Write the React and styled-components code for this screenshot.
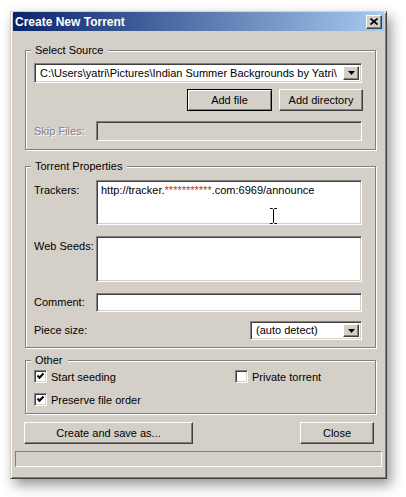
import React from 'react';
import styled, { createGlobalStyle, css } from 'styled-components';

const GlobalStyle = createGlobalStyle`
  html, body { margin: 0; padding: 0; background: #fff; }
  body {
    font-family: "Liberation Sans", Arial, sans-serif;
    font-size: 11px;
    color: #000;
  }
`;

const sunken = css`
  box-sizing: border-box;
  border: 1px solid;
  border-color: #808080 #fff #fff #808080;
  box-shadow: inset 1px 1px #404040, inset -1px -1px #d4d0c8;
`;

const raised = css`
  box-sizing: border-box;
  background: #d4d0c8;
  border: 1px solid;
  border-color: #fff #404040 #404040 #fff;
  box-shadow: inset -1px -1px #808080;
`;

const Page = styled.div`
  width: 406px;
  height: 497px;
  box-sizing: border-box;
  padding: 11px 0 0 10px;
`;

const Window = styled.div`
  width: 377px;
  box-sizing: border-box;
  background: #d4d0c8;
  border: 1px solid;
  border-color: #d4d0c8 #404040 #404040 #d4d0c8;
  box-shadow: inset 1px 1px #fff, inset -1px -1px #808080, 4px 6px 12px rgba(0, 0, 0, 0.42);
  padding: 0 2px 2px 2px;
`;

const TitleBar = styled.div`
  height: 19px;
  display: flex;
  align-items: center;
  justify-content: space-between;
  padding: 0 2px 0 2px;
  background: linear-gradient(to right, #0a246a, #a6caf0);
  color: #fff;
  font-weight: bold;
  font-size: 12px;
`;

const CloseBox = styled.div`
  ${raised};
  width: 16px;
  height: 14px;
  display: flex;
  align-items: center;
  justify-content: center;
`;

const Content = styled.div`
  padding-bottom: 9px;
`;

const Group = styled.div`
  margin: ${(p) => p.$top}px 8px 0 12px;
  border: 1px solid #808080;
  box-shadow: inset 1px 1px #fff, 1px 1px #fff;
  padding: 0 13px ${(p) => p.$bottom}px 8px;
`;

const Legend = styled.div`
  width: fit-content;
  margin: -7px 0 0 -3px;
  padding: 0 5px 0 4px;
  line-height: 13px;
  background: #d4d0c8;
`;

const Combo = styled.div`
  ${sunken};
  background: #fff;
  height: ${(p) => p.$h || 20}px;
  margin-top: ${(p) => p.$top || 0}px;
  padding: 2px;
  display: flex;
  align-items: center;
  ${(p) =>
    p.$w &&
    css`
      width: ${p.$w}px;
      justify-self: end;
    `}
`;

const ComboText = styled.div`
  flex: 1;
  min-width: 0;
  padding-left: 3px;
  white-space: nowrap;
  overflow: hidden;
  line-height: 13px;
`;

const ArrowBtn = styled.div`
  ${raised};
  flex: none;
  width: 16px;
  height: 100%;
  display: flex;
  align-items: center;
  justify-content: center;
`;

const ButtonRow = styled.div`
  display: flex;
  justify-content: ${(p) => p.$justify || 'flex-end'};
  gap: 7px;
  margin: ${(p) => p.$margin};
`;

const Button = styled.div`
  ${raised};
  width: ${(p) => p.$w}px;
  height: 22px;
  display: flex;
  align-items: center;
  justify-content: center;
  ${(p) =>
    p.$default &&
    css`
      border-color: #000;
      box-shadow: inset 1px 1px #fff, inset -1px -1px #808080;
    `}
`;

const FieldRow = styled.div`
  display: grid;
  grid-template-columns: 62px 1fr;
  align-items: ${(p) => (p.$top ? 'start' : 'center')};
  margin-top: ${(p) => p.$mt}px;
`;

const Label = styled.div`
  line-height: 13px;
  padding-top: ${(p) => (p.$top ? 4 : 0)}px;
  ${(p) =>
    p.$disabled &&
    css`
      color: #808080;
      text-shadow: 1px 1px #fff;
    `}
`;

const TextBox = styled.div`
  ${sunken};
  position: relative;
  height: ${(p) => p.$h}px;
  background: ${(p) => (p.$disabled ? '#d4d0c8' : '#fff')};
  padding: 3px 4px;
  line-height: 13px;
  white-space: nowrap;
`;

const Masked = styled.span`
  color: #b23a17;
`;

const Cursor = styled.svg`
  position: absolute;
  left: 172px;
  top: 26px;
`;

const CheckGrid = styled.div`
  display: grid;
  grid-template-columns: 201px 1fr;
  row-gap: 10px;
  margin-top: 3px;
`;

const CheckItem = styled.div`
  display: flex;
  align-items: center;
  gap: 4px;
  height: 13px;
`;

const CheckBox = styled.div`
  ${sunken};
  width: 13px;
  height: 13px;
  background: #fff;
  display: flex;
  align-items: center;
  justify-content: center;
`;

const StatusBar = styled.div`
  margin: 7px 2px 0 2px;
  height: 16px;
  box-sizing: border-box;
  border: 1px solid;
  border-color: #808080 #fff #fff #808080;
`;

const DownArrow = () => (
  <svg width="7" height="4" viewBox="0 0 7 4">
    <polygon points="0,0 7,0 3.5,4" fill="#000" />
  </svg>
);

const Check = ({ on, label }) => (
  <CheckItem>
    <CheckBox>
      {on && (
        <svg width="9" height="9" viewBox="0 0 9 9">
          <path d="M1.5 3.5l2 2.2 4-4.2" stroke="#000" strokeWidth="2" fill="none" />
        </svg>
      )}
    </CheckBox>
    <span>{label}</span>
  </CheckItem>
);

export default function App() {
  return (
    <Page>
      <GlobalStyle />
      <Window>
        <TitleBar>
          <span>Create New Torrent</span>
          <CloseBox>
            <svg width="8" height="7" viewBox="0 0 8 7">
              <path d="M0.5 0.5l7 6M7.5 0.5l-7 6" stroke="#000" strokeWidth="1.7" />
            </svg>
          </CloseBox>
        </TitleBar>
        <Content>
          <Group $top={19} $bottom={8}>
            <Legend>Select Source</Legend>
            <Combo $top={6}>
              <ComboText>C:\Users\yatri\Pictures\Indian Summer Backgrounds by Yatri\</ComboText>
              <ArrowBtn>
                <DownArrow />
              </ArrowBtn>
            </Combo>
            <ButtonRow $margin="6px -1px 0 0">
              <Button $w={85} $default>Add file</Button>
              <Button $w={84}>Add directory</Button>
            </ButtonRow>
            <FieldRow $mt={10}>
              <Label $disabled>Skip Files:</Label>
              <TextBox $h={20} $disabled />
            </FieldRow>
          </Group>

          <Group $top={16} $bottom={7}>
            <Legend>Torrent Properties</Legend>
            <FieldRow $mt={7} $top>
              <Label $top>Trackers:</Label>
              <TextBox $h={45}>
                http://tracker.<Masked>***********</Masked>.com:6969/announce
                <Cursor width="9" height="18" viewBox="0 0 9 18">
                  <path d="M1 1.5h2.5l1 1 1-1H8M4.5 2.5v13M1 16.5h2.5l1-1 1 1H8" stroke="#fff" strokeWidth="3" fill="none" />
                  <path d="M1 1.5h2.5l1 1 1-1H8M4.5 2.5v13M1 16.5h2.5l1-1 1 1H8" stroke="#000" strokeWidth="1" fill="none" />
                </Cursor>
              </TextBox>
            </FieldRow>
            <FieldRow $mt={11} $top>
              <Label $top>Web Seeds:</Label>
              <TextBox $h={46} />
            </FieldRow>
            <FieldRow $mt={11}>
              <Label>Comment:</Label>
              <TextBox $h={19} />
            </FieldRow>
            <FieldRow $mt={9}>
              <Label>Piece size:</Label>
              <Combo $w={112} $h={19}>
                <ComboText>(auto detect)</ComboText>
                <ArrowBtn>
                  <DownArrow />
                </ArrowBtn>
              </Combo>
            </FieldRow>
          </Group>

          <Group $top={12} $bottom={7}>
            <Legend>Other</Legend>
            <CheckGrid>
              <Check on label="Start seeding" />
              <Check label="Private torrent" />
              <Check on label="Preserve file order" />
            </CheckGrid>
          </Group>

          <ButtonRow $justify="space-between" $margin="8px 10px 0 11px">
            <Button $w={169}>Create and save as...</Button>
            <Button $w={74}>Close</Button>
          </ButtonRow>

          <StatusBar />
        </Content>
      </Window>
    </Page>
  );
}
